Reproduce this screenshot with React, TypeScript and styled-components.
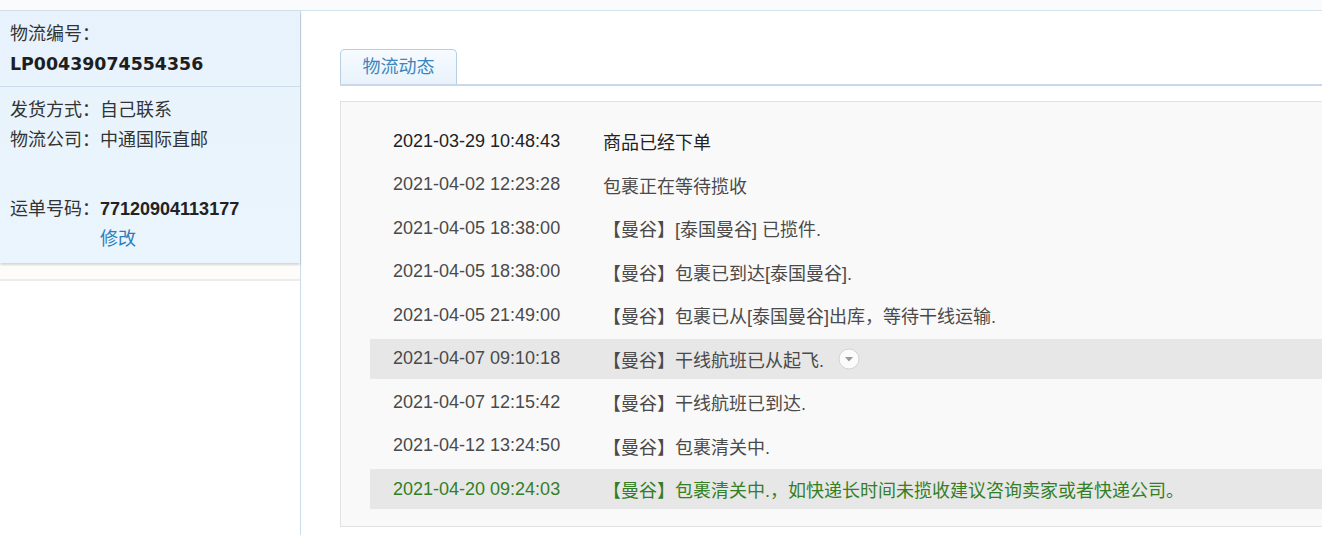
import styled, {createGlobalStyle} from 'styled-components';

const GlobalStyle = createGlobalStyle`
	html, body {
		margin     : 0;
		padding    : 0;
		background : #fff;
		overflow   : hidden;
	}
	body {
		font-family : "Liberation Sans", "Noto Sans CJK SC", sans-serif;
		font-size   : 18px;
		color       : #333;
	}
`;

const Page = styled.div`
	display        : flex;
	flex-direction : column;
	width          : 100%;
	min-height     : 535px;
`;
const TopStrip = styled.div`
	height        : 10px;
	background    : #fafbfd;
	border-bottom : 1px solid #d2e2ea;
`;
const Body = styled.div`
	display               : grid;
	grid-template-columns : 301px 1fr;
	flex                  : 1;
`;
const Sidebar = styled.aside`
	border-right : 1px solid #cbdbe7;
	min-height   : 524px;
`;
const InfoCard = styled.div`
	background : linear-gradient(#e7f2fc, #ebf5fd);
	box-shadow : 0 2px 3px rgba(0, 0, 0, 0.18);
`;
const InfoSection = styled.div<{ last?: boolean }>`
	padding       : 8px 10px ${({last}) => last ? 9 : 7}px;
	border-bottom : ${({last}) => last ? 'none' : '1px solid #cddcea'};
`;
const InfoLine = styled.div<{ spaced?: boolean }>`
	display     : flex;
	height      : 30px;
	line-height : 30px;
	margin-top  : ${({spaced}) => spaced ? 39 : 0}px;
	white-space : nowrap;
`;
const Label = styled.span`
	width       : 90px;
	flex-shrink : 0;
	color       : #333;
`;
const Value = styled.span<{ strong?: boolean }>`
	color       : ${({strong}) => strong ? '#222' : '#333'};
	font-weight : ${({strong}) => strong ? 700 : 400};
`;
const LogisticsNo = styled.div`
	height      : 30px;
	line-height : 30px;
	font-family : "DejaVu Sans", "Liberation Sans", sans-serif;
	font-weight : 700;
	font-size   : 17.4px;
	color       : #1e1e1e;
`;
const EditLink = styled.a`
	margin-left     : 90px;
	color           : #2c7dbd;
	text-decoration : none;
	cursor          : pointer;
`;
const SidebarFoot = styled.div`
	height        : 13px;
	margin-top    : 3px;
	background    : #fdfcf9;
	border-bottom : 2px solid #ececec;
`;

const Main = styled.main`
	padding : 38px 0 0 39px;
`;
const TabBar = styled.div`
	display       : flex;
	border-bottom : 2px solid #c9d9e8;
`;
const Tab = styled.div<{ active?: boolean }>`
	width         : 117px;
	height        : 35px;
	line-height   : 35px;
	box-sizing    : border-box;
	text-align    : center;
	border        : 1px solid #b7cfe3;
	border-bottom : none;
	border-radius : 5px 5px 0 0;
	background    : ${({active}) => active ? 'linear-gradient(#f6fbff, #e9f2fb)' : '#fff'};
	color         : #3b86bd;
`;
const LogBox = styled.div`
	margin     : 15px -30px 0 0;
	padding    : 19px 0 17px 29px;
	border     : 1px solid #e2e2e2;
	background : #f9f9f9;
`;
const LogRow = styled.div<{ tone: 'first' | 'normal' | 'latest'; highlight?: boolean }>`
	display               : grid;
	grid-template-columns : 210px 1fr;
	align-items           : center;
	height                : 40px;
	padding-left          : 23px;
	margin-bottom         : 3.5px;
	background            : ${({highlight}) => highlight ? '#e7e7e7' : 'transparent'};
	color                 : ${({tone}) => tone === 'first' ? '#222' : tone === 'latest' ? '#347f25' : '#4a4a4a'};
	white-space           : nowrap;
	&:last-child {
		margin-bottom : 0;
	}
`;
const LogText = styled.span`
	display     : flex;
	align-items : center;
`;
const ExpandIcon = styled.svg`
	margin-left : 13px;
	flex-shrink : 0;
`;

type LogItem = { time: string; text: string; expand?: boolean; highlight?: boolean };

const logs: LogItem[] = [
	{time: '2021-03-29 10:48:43', text: '商品已经下单'},
	{time: '2021-04-02 12:23:28', text: '包裹正在等待揽收'},
	{time: '2021-04-05 18:38:00', text: '【曼谷】[泰国曼谷] 已揽件.'},
	{time: '2021-04-05 18:38:00', text: '【曼谷】包裹已到达[泰国曼谷].'},
	{time: '2021-04-05 21:49:00', text: '【曼谷】包裹已从[泰国曼谷]出库，等待干线运输.'},
	{time: '2021-04-07 09:10:18', text: '【曼谷】干线航班已从起飞.', expand: true, highlight: true},
	{time: '2021-04-07 12:15:42', text: '【曼谷】干线航班已到达.'},
	{time: '2021-04-12 13:24:50', text: '【曼谷】包裹清关中.'},
	{time: '2021-04-20 09:24:03', text: '【曼谷】包裹清关中.，如快递长时间未揽收建议咨询卖家或者快递公司。', highlight: true}
];

const Chevron = () => <ExpandIcon width="24" height="24" viewBox="0 0 24 24">
	<circle cx="12" cy="12" r="10" fill="#fbfbfb" stroke="#d4d4d4"/>
	<path d="M8 10h8l-4 4.4z" fill="#999"/>
</ExpandIcon>;

export default function App() {
	return <>
		<GlobalStyle/>
		<Page>
			<TopStrip/>
			<Body>
				<Sidebar>
					<InfoCard>
						<InfoSection>
							<InfoLine>物流编号：</InfoLine>
							<LogisticsNo>LP00439074554356</LogisticsNo>
						</InfoSection>
						<InfoSection last>
							<InfoLine><Label>发货方式：</Label><Value>自己联系</Value></InfoLine>
							<InfoLine><Label>物流公司：</Label><Value>中通国际直邮</Value></InfoLine>
							<InfoLine spaced><Label>运单号码：</Label><Value strong>77120904113177</Value></InfoLine>
							<InfoLine><EditLink>修改</EditLink></InfoLine>
						</InfoSection>
					</InfoCard>
					<SidebarFoot/>
				</Sidebar>
				<Main>
					<TabBar>
						<Tab active>物流动态</Tab>
					</TabBar>
					<LogBox>
						{logs.map((log, index) => <LogRow key={index}
						                                  highlight={log.highlight}
						                                  tone={index === 0 ? 'first' : index === logs.length - 1 ? 'latest' : 'normal'}>
							<span>{log.time}</span>
							<LogText>{log.text}{log.expand && <Chevron/>}</LogText>
						</LogRow>)}
					</LogBox>
				</Main>
			</Body>
		</Page>
	</>;
}
